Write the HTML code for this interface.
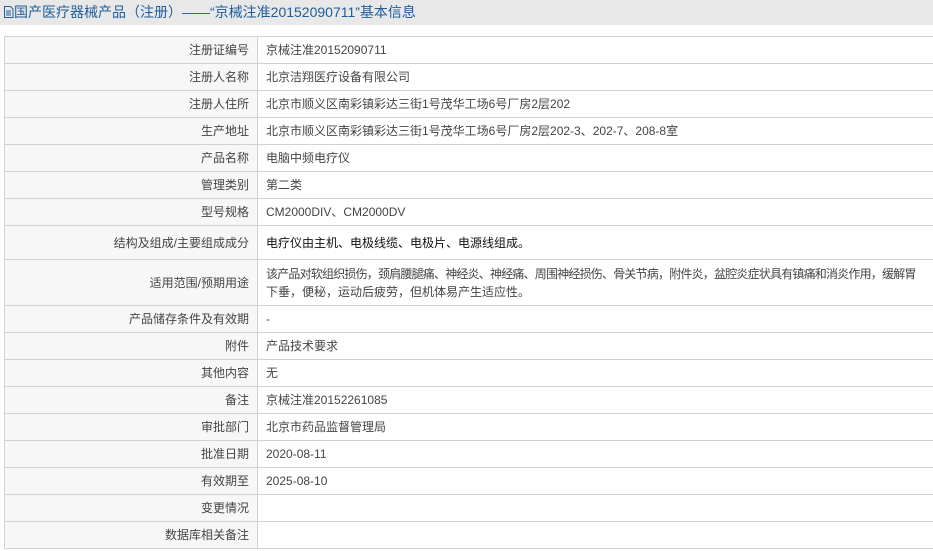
<!DOCTYPE html>
<html><head><meta charset="utf-8"><style>
body{margin:0;width:933px;height:551px;overflow:hidden;background:#fff;font-family:"Liberation Sans","Noto Sans CJK SC",sans-serif;}
.hd{height:25px;background:#e8e8e8;color:#1f5c9c;font-size:14px;line-height:24px;padding-left:3px;white-space:nowrap;}
table{position:absolute;left:4px;top:36px;width:940px;border-collapse:collapse;table-layout:fixed;font-size:12px;color:#444;}
td{border:1px solid #d2d2d2;height:26px;padding:0 8px;line-height:18px;overflow:hidden;}
td.l{text-align:right;background:#f7f7f7;}
</style></head><body>
<div class="hd"><svg width="11" height="12" viewBox="0 0 11 12" style="vertical-align:-1px"><path d="M1.5 .5h6l2.5 2.5v8.5h-8.5z" fill="none" stroke="#1f5c9c"/><path d="M3 5h5M3 7h5M3 9h5" stroke="#1f5c9c"/></svg>国产医疗器械产品（注册）——“京械注准20152090711”基本信息</div>
<table>
<colgroup><col style="width:253px"><col></colgroup>
<tr><td class="l">注册证编号</td><td>京械注准20152090711</td></tr>
<tr><td class="l">注册人名称</td><td>北京洁翔医疗设备有限公司</td></tr>
<tr><td class="l">注册人住所</td><td>北京市顺义区南彩镇彩达三街1号茂华工场6号厂房2层202</td></tr>
<tr><td class="l">生产地址</td><td>北京市顺义区南彩镇彩达三街1号茂华工场6号厂房2层202-3、202-7、208-8室</td></tr>
<tr><td class="l">产品名称</td><td>电脑中频电疗仪</td></tr>
<tr><td class="l">管理类别</td><td>第二类</td></tr>
<tr><td class="l">型号规格</td><td>CM2000DIV、CM2000DV</td></tr>
<tr><td class="l" style="height:33px">结构及组成/主要组成成分</td><td style="color:#111">电疗仪由主机、电极线缆、电极片、电源线组成。</td></tr>
<tr><td class="l" style="height:45px">适用范围/预期用途</td><td style="white-space:nowrap"><span style="letter-spacing:-0.8px">该产品对软组织损伤，颈肩腰腿痛、神经炎、神经痛、周围神经损伤、骨关节病，附件炎，盆腔炎症状具有镇痛和消炎作用，缓解胃</span><br>下垂，便秘，运动后疲劳，但机体易产生适应性。</td></tr>
<tr><td class="l">产品储存条件及有效期</td><td>-</td></tr>
<tr><td class="l">附件</td><td>产品技术要求</td></tr>
<tr><td class="l">其他内容</td><td>无</td></tr>
<tr><td class="l">备注</td><td>京械注准20152261085</td></tr>
<tr><td class="l">审批部门</td><td>北京市药品监督管理局</td></tr>
<tr><td class="l">批准日期</td><td>2020-08-11</td></tr>
<tr><td class="l">有效期至</td><td>2025-08-10</td></tr>
<tr><td class="l">变更情况</td><td></td></tr>
<tr><td class="l">数据库相关备注</td><td></td></tr>
</table>
</body></html>
